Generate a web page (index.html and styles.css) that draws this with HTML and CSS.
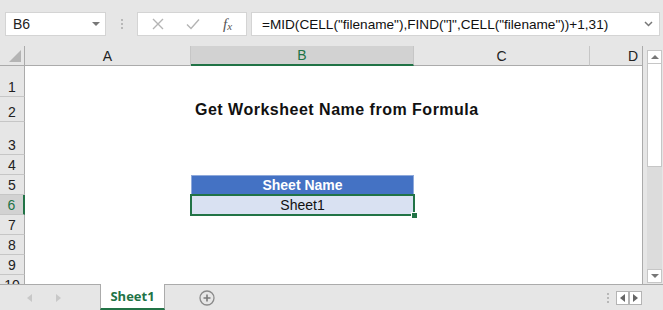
FILE: index.html
```html
<!DOCTYPE html>
<html lang="en">
<head>
    <meta charset="UTF-8">
    <title>Get Worksheet Name from Formula</title>
    <link rel="stylesheet" href="styles.css">
</head>
<body>
    <div class="excel">
        <div class="formulaBar">
            <div class="nameBox">
                <span>B6</span>
                <span class="caret"></span>
            </div>
            <div class="grip"><i></i><i></i><i></i></div>
            <div class="fxBox">
                <svg class="fxBtn" width="14" height="14" viewBox="0 0 14 14"><path d="M2 2 L12 12 M12 2 L2 12" stroke="#b4b4b4" stroke-width="1.4" fill="none"/></svg>
                <svg class="fxBtn" width="16" height="14" viewBox="0 0 16 14"><path d="M2 7.5 L6 11.5 L14 2.5" stroke="#b4b4b4" stroke-width="1.4" fill="none"/></svg>
                <span class="fxLabel">f<sub>x</sub></span>
            </div>
            <div class="formulaInput">
                <span class="formulaText">=MID(CELL("filename"),FIND("]",CELL("filename"))+1,31)</span>
                <svg class="chevron" width="9" height="6" viewBox="0 0 9 6"><path d="M1 1 L4.5 4.5 L8 1" stroke="#777" stroke-width="1.5" fill="none"/></svg>
            </div>
        </div>

        <div class="sheetArea">
            <div class="grid">
                <div class="corner"><span class="cornerTri"></span></div>
                <div class="colHead">A</div>
                <div class="colHead selectedCol">B</div>
                <div class="colHead">C</div>
                <div class="colHead lastCol">D</div>

                <div class="rowHead">1</div>
                <div class="cell"></div><div class="cell"></div><div class="cell"></div><div class="cell"></div>

                <div class="rowHead">2</div>
                <div class="cell"></div>
                <div class="cell titleCell">Get Worksheet Name from Formula</div>
                <div class="cell"></div><div class="cell"></div>

                <div class="rowHead">3</div>
                <div class="cell"></div><div class="cell"></div><div class="cell"></div><div class="cell"></div>

                <div class="rowHead">4</div>
                <div class="cell"></div><div class="cell"></div><div class="cell"></div><div class="cell"></div>

                <div class="rowHead">5</div>
                <div class="cell"></div>
                <div class="cell tableHead">Sheet Name</div>
                <div class="cell"></div><div class="cell"></div>

                <div class="rowHead selectedRow">6</div>
                <div class="cell"></div>
                <div class="cell tableCell activeCell">Sheet1<span class="fillHandle"></span></div>
                <div class="cell"></div><div class="cell"></div>

                <div class="rowHead">7</div>
                <div class="cell"></div><div class="cell"></div><div class="cell"></div><div class="cell"></div>

                <div class="rowHead">8</div>
                <div class="cell"></div><div class="cell"></div><div class="cell"></div><div class="cell"></div>

                <div class="rowHead">9</div>
                <div class="cell"></div><div class="cell"></div><div class="cell"></div><div class="cell"></div>

                <div class="rowHead">10</div>
                <div class="cell"></div><div class="cell"></div><div class="cell"></div><div class="cell"></div>
            </div>

            <div class="vScroll">
                <div class="scrollBtn"><span class="triUp"></span></div>
                <div class="scrollThumb"></div>
                <div class="scrollTrack"></div>
                <div class="scrollBtn"><span class="triDown"></span></div>
            </div>
        </div>

        <div class="tabBar">
            <div class="tabNav">
                <span class="triLeft faded"></span>
                <span class="triRight faded"></span>
            </div>
            <div class="sheetTab">Sheet1</div>
            <div class="addSheet">
                <svg width="16" height="16" viewBox="0 0 16 16"><circle cx="8" cy="8" r="7" stroke="#8a8a8a" stroke-width="1.3" fill="none"/><path d="M8 4.5 V11.5 M4.5 8 H11.5" stroke="#7a7a7a" stroke-width="1.6"/></svg>
            </div>
            <div class="tabSpacer"></div>
            <div class="grip small"><i></i><i></i><i></i></div>
            <div class="hScrollBtns">
                <div class="hBtn"><span class="triLeft"></span></div>
                <div class="hBtn"><span class="triRight"></span></div>
            </div>
            <div class="tabEnd"></div>
        </div>
    </div>
</body>
</html>
```

FILE: styles.css
```css
body {
    margin: 0;
    padding: 0;
    background-color: #e6e6e6;
}

.excel {
    width: 663px;
    height: 310px;
    overflow: hidden;
    background-color: #e6e6e6;
    font-family: 'Liberation Sans', Arial, sans-serif;
}

/* formula bar */

.formulaBar {
    height: 46px;
    display: flex;
    align-items: center;
    padding-left: 5px;
    box-sizing: border-box;
    padding-top: 2px;
}

.nameBox {
    width: 101px;
    height: 24px;
    box-sizing: border-box;
    background-color: white;
    border: 1px solid #d4d4d4;
    display: flex;
    align-items: center;
    justify-content: space-between;
    padding: 0 5px 0 7px;
    font-size: 14px;
    color: #222;
}

.caret {
    width: 0;
    height: 0;
    border-left: 4px solid transparent;
    border-right: 4px solid transparent;
    border-top: 4px solid #777;
}

.grip {
    width: 31px;
    display: flex;
    flex-direction: column;
    align-items: center;
    gap: 2px;
}

.grip i {
    width: 2px;
    height: 2px;
    background-color: #b8b8b8;
}

.fxBox {
    width: 110px;
    height: 24px;
    box-sizing: border-box;
    background-color: white;
    border: 1px solid #d4d4d4;
    display: flex;
    align-items: center;
    padding-left: 13px;
    gap: 20px;
}

.fxLabel {
    font-family: 'Liberation Serif', 'Times New Roman', serif;
    font-style: italic;
    font-size: 15px;
    color: #555;
    margin-left: 2px;
}

.fxLabel sub {
    font-size: 11px;
    vertical-align: -1px;
}

.formulaInput {
    flex: 1;
    margin-left: 4px;
    margin-right: 3px;
    height: 24px;
    box-sizing: border-box;
    background-color: white;
    border: 1px solid #d4d4d4;
    display: flex;
    align-items: center;
    justify-content: space-between;
    padding: 0 6px 0 10px;
}

.formulaText {
    font-size: 13.6px;
    color: #111;
    white-space: nowrap;
}

/* sheet */

.sheetArea {
    display: flex;
    height: 238px;
}

.grid {
    width: 642px;
    height: 238px;
    overflow: hidden;
    background-color: white;
    border-right: 1px solid #ababab;
    display: grid;
    grid-template-columns: 25px 166px 223px 176px 52px;
    grid-template-rows: 20px 31px 25px 33px 20px 20px 20px 20px 20px 20px 20px;
}

.corner {
    background-color: #e6e6e6;
    border-right: 1px solid #ababab;
    border-bottom: 1px solid #ababab;
    position: relative;
}

.cornerTri {
    position: absolute;
    right: 3px;
    bottom: 3px;
    width: 0;
    height: 0;
    border-left: 12px solid transparent;
    border-bottom: 12px solid #b4b4b4;
}

.colHead {
    background-color: #e6e6e6;
    border-right: 1px solid #c6c6c6;
    border-bottom: 1px solid #ababab;
    display: flex;
    align-items: center;
    justify-content: center;
    font-size: 14px;
    color: #222;
}

.colHead.lastCol {
    border-right: none;
    justify-content: flex-end;
    padding-right: 4px;
}

.colHead.selectedCol {
    background-color: #d2d2d2;
    color: #217346;
    border-bottom: 2px solid #217346;
}

.rowHead {
    background-color: #e6e6e6;
    border-right: 1px solid #ababab;
    border-bottom: 1px solid #c6c6c6;
    display: flex;
    align-items: flex-end;
    justify-content: center;
    padding-bottom: 1px;
    font-size: 14px;
    color: #222;
}

.rowHead.selectedRow {
    background-color: #d2d2d2;
    color: #217346;
    border-right: 2px solid #217346;
}

.cell {
    font-size: 14px;
    color: #111;
    white-space: nowrap;
    display: flex;
    align-items: flex-end;
    padding-bottom: 2px;
}

.titleCell {
    font-weight: bold;
    font-size: 16px;
    letter-spacing: 0.5px;
    padding-left: 4px;
    padding-bottom: 3px;
}

.tableHead {
    background-color: #4472c4;
    color: white;
    font-weight: bold;
    justify-content: center;
    border: 1px solid #8ea9db;
    border-bottom: none;
}

.tableCell {
    background-color: #d9e1f2;
    justify-content: center;
}

.activeCell {
    position: relative;
}

.activeCell::after {
    content: "";
    position: absolute;
    left: -1px;
    top: -1px;
    right: -1px;
    bottom: -1px;
    border: 2px solid #217346;
}

.fillHandle {
    position: absolute;
    right: -4px;
    bottom: -4px;
    width: 5px;
    height: 5px;
    background-color: #217346;
    border: 1px solid white;
    z-index: 2;
}

/* scrollbars */

.vScroll {
    width: 20px;
    display: flex;
    flex-direction: column;
    align-items: center;
    padding-top: 4px;
    padding-bottom: 1px;
    box-sizing: border-box;
    padding-left: 3px;
}

.scrollBtn {
    width: 15px;
    height: 14px;
    box-sizing: border-box;
    background-color: white;
    border: 1px solid #c6c6c6;
    display: flex;
    align-items: center;
    justify-content: center;
}

.scrollThumb {
    width: 15px;
    height: 103px;
    box-sizing: border-box;
    background-color: white;
    border: 1px solid #c6c6c6;
    border-top: none;
}

.scrollTrack {
    flex: 1;
    width: 15px;
    background-color: #dcdcdc;
}

.triUp {
    border-left: 4px solid transparent;
    border-right: 4px solid transparent;
    border-bottom: 4px solid #777;
}

.triDown {
    border-left: 4px solid transparent;
    border-right: 4px solid transparent;
    border-top: 4px solid #777;
}

.triLeft {
    width: 0;
    height: 0;
    border-top: 4px solid transparent;
    border-bottom: 4px solid transparent;
    border-right: 5px solid #666;
}

.triRight {
    width: 0;
    height: 0;
    border-top: 4px solid transparent;
    border-bottom: 4px solid transparent;
    border-left: 5px solid #666;
}

.triLeft.faded {
    border-right-color: #c8c8c8;
}

.triRight.faded {
    border-left-color: #c8c8c8;
}

/* tab bar */

.tabBar {
    height: 26px;
    display: flex;
    align-items: stretch;
    border-top: 1px solid #ababab;
    box-sizing: border-box;
}

.tabNav {
    width: 100px;
    display: flex;
    align-items: center;
    padding-left: 27px;
    gap: 24px;
    box-sizing: border-box;
}

.sheetTab {
    width: 65px;
    box-sizing: border-box;
    margin-top: -1px;
    background-color: white;
    border-left: 1px solid #ababab;
    border-right: 1px solid #ababab;
    border-bottom: 2px solid #217346;
    display: flex;
    align-items: center;
    justify-content: center;
    font-family: 'Open Sans', sans-serif;
    font-weight: bold;
    font-size: 13px;
    color: #217346;
}

.addSheet {
    width: 83px;
    display: flex;
    align-items: center;
    justify-content: center;
}

.tabSpacer {
    flex: 1;
}

.grip.small {
    width: 16px;
    justify-content: center;
}

.hScrollBtns {
    display: flex;
    align-items: center;
}

.hBtn {
    width: 13px;
    height: 14px;
    box-sizing: border-box;
    background-color: white;
    border: 1px solid #b4b4b4;
    display: flex;
    align-items: center;
    justify-content: center;
}

.tabEnd {
    width: 21px;
}
```
